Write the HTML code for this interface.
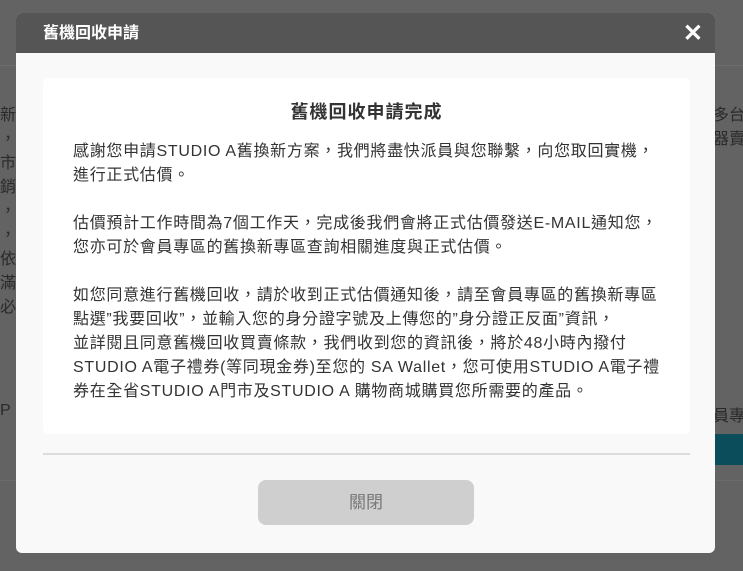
<!DOCTYPE html>
<html><head><meta charset="utf-8"><style>
body{margin:0;width:743px;height:571px;background:#636363;position:relative;overflow:hidden;font-family:"Liberation Sans","Noto Sans CJK TC",sans-serif}
.bg{position:absolute;color:#2a2a2a;font-size:16px;white-space:nowrap}
.modal{position:absolute;left:16px;top:13px;width:699px;height:540px;background:#f9f9f9;border-radius:6px;overflow:hidden}
.hd{height:40px;background:#555;color:#fff;font-size:16px;font-weight:bold;line-height:42px;padding-left:27px}
.x{position:absolute;right:12px;top:6px;color:#fff;font-size:24px;font-weight:bold}
.card{position:absolute;left:27px;top:65px;width:647px;height:356px;background:#fff;border-radius:5px}
.t{text-align:center;font-size:18px;color:#333;margin-top:20px;font-weight:bold;letter-spacing:1px}
.p{margin:16px 0 0 30px;font-size:16px;line-height:24px;color:#333;white-space:nowrap;letter-spacing:0.7px}
.p div{margin-bottom:24px}
.hr{position:absolute;left:27px;top:440px;width:647px;height:2px;background:#ddd}
.btn{position:absolute;left:242px;top:467px;width:216px;height:45px;background:#cfcfcf;border-radius:8px;color:#777;font-size:17px;text-align:center;line-height:46px}
</style></head><body>
<div style="position:absolute;left:0;top:65px;width:743px;height:1px;background:#6e6e6e"></div>
<div class="bg" style="left:0;top:104px;line-height:24px">新<br>，<br>市<br>銷<br>，<br>，<br>依<br>滿<br>必</div>
<div class="bg" style="left:713px;top:104px;line-height:24px">多台<br>器賣</div>
<div class="bg" style="left:0;top:402px">P</div>
<div class="bg" style="left:713px;top:402px">員專</div>
<div style="position:absolute;left:710px;top:434px;width:33px;height:31px;background:#0c4d5c"></div>
<div style="position:absolute;left:0;top:480px;width:743px;height:1px;background:#6a6a6a"></div>
<div class="modal">
<div class="hd">舊機回收申請</div><div class="x">✕</div>
<div class="card">
<div class="t">舊機回收申請完成</div>
<div class="p">
<div>感謝您申請STUDIO A舊換新方案，我們將盡快派員與您聯繫，向您取回實機，<br>進行正式估價。</div>
<div>估價預計工作時間為7個工作天，完成後我們會將正式估價發送E-MAIL通知您，<br>您亦可於會員專區的舊換新專區查詢相關進度與正式估價。</div>
<div>如您同意進行舊機回收，請於收到正式估價通知後，請至會員專區的舊換新專區<br>點選”我要回收”，並輸入您的身分證字號及上傳您的”身分證正反面”資訊，<br>並詳閱且同意舊機回收買賣條款，我們收到您的資訊後，將於48小時內撥付<br>STUDIO A電子禮券(等同現金券)至您的 SA Wallet，您可使用STUDIO A電子禮<br>券在全省STUDIO A門市及STUDIO A 購物商城購買您所需要的產品。</div>
</div></div>
<div class="hr"></div>
<div class="btn">關閉</div>
</div>
</body></html>
